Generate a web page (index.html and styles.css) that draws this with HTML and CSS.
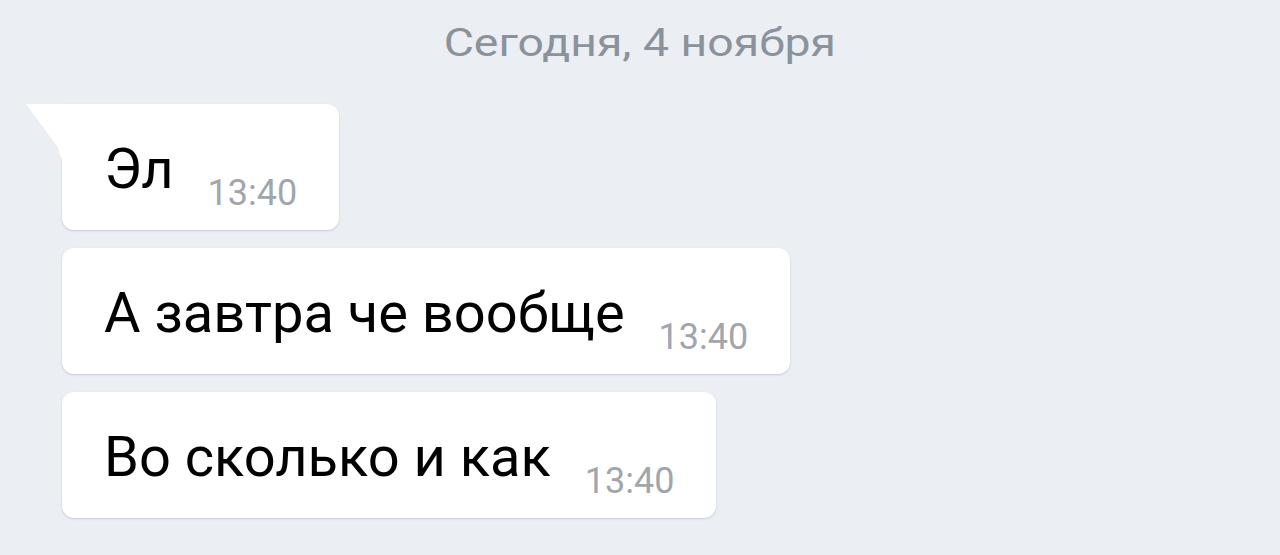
FILE: index.html
```html
<!DOCTYPE html>
<html lang="ru">
<head>
    <meta charset="UTF-8">
    <meta name="viewport" content="width=device-width, initial-scale=1.0">
    <title>Чат</title>
    <link rel="stylesheet" href="styles.css">
</head>
<body>
    <div id="chat">
        <div class="day"><span>Сегодня, 4 ноября</span></div>
        <div class="msg first">
            <span class="text">Эл</span>
            <span class="time">13:40</span>
        </div>
        <div class="msg">
            <span class="text">А завтра че вообще</span>
            <span class="time">13:40</span>
        </div>
        <div class="msg">
            <span class="text">Во сколько и как</span>
            <span class="time">13:40</span>
        </div>
    </div>
</body>
</html>
```

FILE: styles.css
```css
*{
    box-sizing: border-box;
    margin: 0px;
    padding: 0px;
}
body{
    background-color: #ebeef3;
    font-family: Roboto, 'Noto Sans', sans-serif;
    height: 555px;
    overflow: hidden;
}
#chat{
    display: flex;
    flex-direction: column;
    align-items: flex-start;
    padding: 19px 0px 0px 62px;
    gap: 18px;
}
.day{
    align-self: stretch;
    margin-left: -62px;
    text-align: center;
    color: #8a929c;
    font-size: 38px;
    line-height: 48px;
    margin-bottom: 19px;
}
/* the date line is drawn wider than the message text */
.day > span{
    display: inline-block;
    transform: scaleX(1.22);
}
.msg{
    position: relative;
    display: flex;
    align-items: flex-start;
    background: #fff;
    border-radius: 12px;
    padding: 33px 42px 19px 42px;
    box-shadow: 0px 1px 2px rgba(150, 160, 175, 0.45);
}
.msg.first{
    border-top-left-radius: 0px;
}
/* tail on the first message */
.msg.first::before{
    content: '';
    position: absolute;
    top: 0px;
    left: -36px;
    width: 37px;
    height: 58px;
    background: #fff;
    clip-path: polygon(0 0, 100% 0, 100% 100%, 92% 88%, 86% 74%);
}
.text{
    font-size: 56px;
    line-height: 64px;
    color: #000;
}
.time{
    font-size: 36px;
    line-height: 36px;
    margin-top: 38px;
    margin-left: 34px;
    color: #a1a6ad;
}
```
